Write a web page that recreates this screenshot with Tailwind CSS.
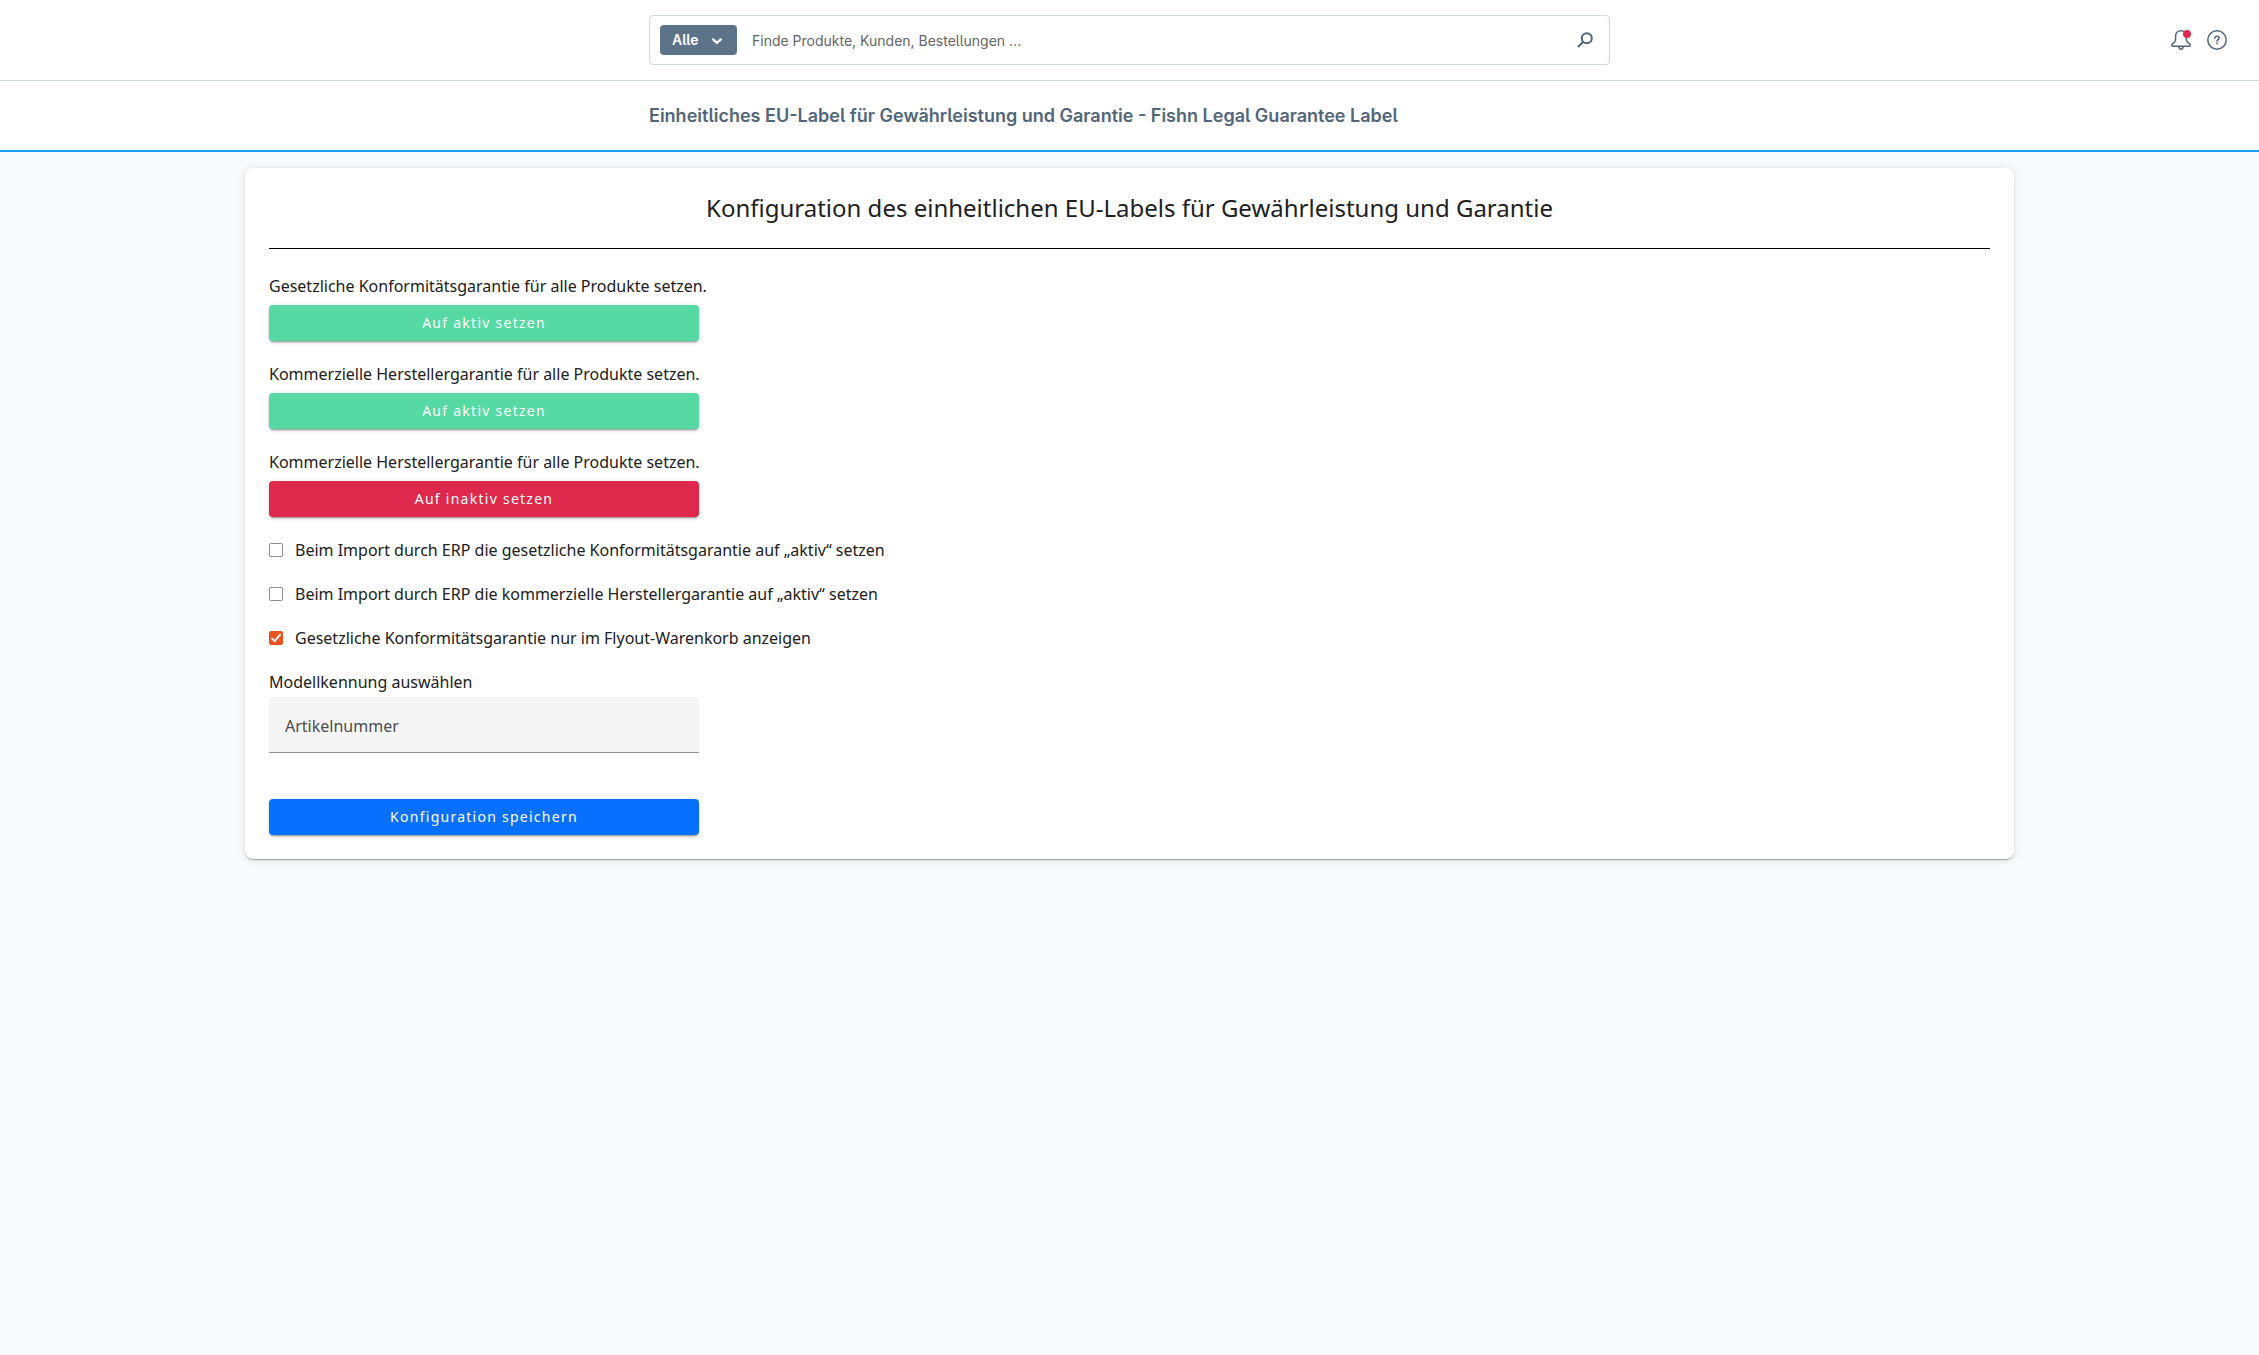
<!DOCTYPE html>
<html lang="de">
  <head>
    <meta charset="UTF-8" />
    <meta name="viewport" content="width=device-width, initial-scale=1.0" />
    <title>Fishn Legal Guarantee Label</title>
    <script src="https://cdn.jsdelivr.net/npm/@tailwindcss/browser@4"></script>
  </head>
  <body class="bg-[#f9fafb] min-h-screen text-[#212121] font-['Noto_Sans',sans-serif]">
    <!-- Top bar -->
    <header
      class="flex items-center bg-white border-b border-[#d1d9e0] py-[15px] font-['Inter',sans-serif] [font-feature-settings:'cv05']"
    >
      <div class="flex-1 px-4"></div>
      <form
        id="searchForm"
        role="search"
        class="flex items-center w-full max-w-[961px] h-[50px] pl-2.5 pr-3 bg-white border border-[#d1d9e0] rounded"
      >
        <div class="relative">
          <select
            aria-label="Suchbereich"
            class="appearance-none w-[77px] h-[30px] pl-3 rounded bg-[#5c738a] text-white text-sm font-semibold"
          >
            <option>Alle</option>
          </select>
          <svg
            class="absolute right-[14px] top-[10px] w-3 h-3 pointer-events-none"
            viewBox="0 0 12 12"
            fill="none"
            stroke="#fff"
            stroke-width="2.4"
            stroke-linecap="round"
            stroke-linejoin="round"
          >
            <path d="M2.200 4.4 6 8 9.800 4.4" />
          </svg>
        </div>
        <input
          type="search"
          aria-label="Suche"
          placeholder="Finde Produkte, Kunden, Bestellungen ..."
          class="flex-1 h-full px-[15px] text-sm outline-none placeholder:text-[#666]"
        />
        <button type="submit" aria-label="Suchen" class="p-1">
          <svg
            class="w-4 h-4"
            viewBox="0 0 16 16"
            fill="none"
            stroke="#52667a"
            stroke-width="2"
            stroke-linecap="round"
          >
            <circle cx="9.8" cy="6.2" r="5" />
            <path d="M6 10 1.5 14.5" />
          </svg>
        </button>
      </form>
      <div class="flex-1 px-4">
        <div class="flex justify-end gap-4 pr-4">
          <button type="button" aria-label="Benachrichtigungen" class="relative">
            <svg
              class="w-5 h-5"
              viewBox="0 0 20 20"
              fill="none"
              stroke="#52667a"
              stroke-width="1.5"
              stroke-linecap="round"
              stroke-linejoin="round"
            >
              <path
                d="M10 .8C6.600.8 4.600 3.200 4.600 6.200V9.200C4.600 11.300 3.800 12.200 2.200 13.200C1.300 13.800.8 14.500.8 15.300C.8 15.900 1.200 16.200 1.700 16.200H18.300C18.800 16.200 19.200 15.900 19.200 15.300C19.200 14.500 18.700 13.800 17.800 13.200C16.200 12.200 15.400 11.300 15.400 9.200V6.200C15.400 3.200 13.400.8 10 .8Z"
              />
              <path d="M7.800 17.200C8.200 18.600 9 19.200 10 19.200S11.800 18.600 12.200 17.200" />
            </svg>
            <span class="absolute right-0 top-0 w-2 h-2 rounded-full bg-[#de294c]"></span>
          </button>
          <button type="button" aria-label="Hilfe">
            <svg
              class="w-5 h-5"
              viewBox="0 0 20 20"
              fill="none"
              stroke="#52667a"
              stroke-width="1.5"
              stroke-linecap="round"
              stroke-linejoin="round"
            >
              <circle cx="10" cy="10" r="9.200" />
              <path d="M7.900 8.200C7.900 7 8.800 6.300 10 6.300S12.100 7.100 12.100 8.200C12.100 9.500 10 9.700 10 11.200" />
              <circle cx="10" cy="13.500" r=".3" />
            </svg>
          </button>
        </div>
      </div>
    </header>

    <!-- Page title -->
    <div
      class="bg-white border-b-2 border-[#189eff] font-['Inter',sans-serif] [font-feature-settings:'cv05']"
    >
      <h1
        class="max-w-[961px] mx-auto py-[21px] text-lg leading-[27px] font-semibold text-[#52667a]"
      >
        Einheitliches EU-Label für Gewährleistung und Garantie - Fishn Legal Guarantee Label
      </h1>
    </div>

    <main class="p-4">
      <form
        id="configForm"
        class="max-w-[1769px] mx-auto p-6 bg-white rounded-lg leading-[22px] shadow-[0_2px_1px_-1px_rgba(0,0,0,0.2),0_1px_1px_0_rgba(0,0,0,0.14),0_1px_8px_0_rgba(0,0,0,0.12)]"
      >
        <h2 class="pb-6 mb-[26px] border-b border-black text-center text-2xl leading-8">
          Konfiguration des einheitlichen EU-Labels für Gewährleistung und Garantie
        </h2>

        <div class="space-y-[22px]">
          <div>
            <p class="mb-2">Gesetzliche Konformitätsgarantie für alle Produkte setzen.</p>
            <button
              type="button"
              class="block w-full max-w-[430px] h-9 rounded bg-[#57d9a3] text-white text-sm tracking-[0.09em] shadow-[0_3px_1px_-2px_rgba(0,0,0,0.2),0_2px_2px_0_rgba(0,0,0,0.14),0_1px_5px_0_rgba(0,0,0,0.12)]"
            >
              Auf aktiv setzen
            </button>
          </div>

          <div>
            <p class="mb-2">Kommerzielle Herstellergarantie für alle Produkte setzen.</p>
            <button
              type="button"
              class="block w-full max-w-[430px] h-9 rounded bg-[#57d9a3] text-white text-sm tracking-[0.09em] shadow-[0_3px_1px_-2px_rgba(0,0,0,0.2),0_2px_2px_0_rgba(0,0,0,0.14),0_1px_5px_0_rgba(0,0,0,0.12)]"
            >
              Auf aktiv setzen
            </button>
          </div>

          <div>
            <p class="mb-2">Kommerzielle Herstellergarantie für alle Produkte setzen.</p>
            <button
              type="button"
              class="block w-full max-w-[430px] h-9 rounded bg-[#de294c] text-white text-sm tracking-[0.09em] shadow-[0_3px_1px_-2px_rgba(0,0,0,0.2),0_2px_2px_0_rgba(0,0,0,0.14),0_1px_5px_0_rgba(0,0,0,0.12)]"
            >
              Auf inaktiv setzen
            </button>
          </div>

          <div class="flex items-center gap-3">
            <input
              type="checkbox"
              id="importLegal"
              class="appearance-none w-3.5 h-3.5 bg-white border border-[#8f8f9d] rounded-xs checked:bg-[#e95420] checked:border-[#e95420]"
            />
            <label for="importLegal"
              >Beim Import durch ERP die gesetzliche Konformitätsgarantie auf „aktiv“ setzen</label
            >
          </div>

          <div class="flex items-center gap-3">
            <input
              type="checkbox"
              id="importCommercial"
              class="appearance-none w-3.5 h-3.5 bg-white border border-[#8f8f9d] rounded-xs checked:bg-[#e95420] checked:border-[#e95420]"
            />
            <label for="importCommercial"
              >Beim Import durch ERP die kommerzielle Herstellergarantie auf „aktiv“ setzen</label
            >
          </div>

          <div class="flex items-center gap-3">
            <span class="relative flex">
              <input
                type="checkbox"
                id="flyoutOnly"
                checked
                class="peer appearance-none w-3.5 h-3.5 bg-white border border-[#8f8f9d] rounded-xs checked:bg-[#e95420] checked:border-[#e95420]"
              />
              <svg
                class="hidden peer-checked:block absolute inset-0 w-3.5 h-3.5 pointer-events-none"
                viewBox="0 0 14 14"
                fill="none"
                stroke="#fff"
                stroke-width="1.8"
                stroke-linecap="round"
                stroke-linejoin="round"
              >
                <path d="M3 7.600 5.600 10.200 11 3.800" />
              </svg>
            </span>
            <label for="flyoutOnly"
              >Gesetzliche Konformitätsgarantie nur im Flyout-Warenkorb anzeigen</label
            >
          </div>

          <div>
            <label for="modelId" class="block mb-1">Modellkennung auswählen</label>
            <input
              type="text"
              id="modelId"
              placeholder="Artikelnummer"
              class="block w-full max-w-[430px] h-14 px-4 pt-0.5 bg-[#f5f5f5] border-b border-[#949494] rounded-t outline-none placeholder:text-[#4d4d4d]"
            />
          </div>
        </div>

        <button
          type="submit"
          class="block w-full max-w-[430px] h-9 mt-[46px] rounded bg-[#0870ff] text-white text-sm tracking-[0.09em] shadow-[0_3px_1px_-2px_rgba(0,0,0,0.2),0_2px_2px_0_rgba(0,0,0,0.14),0_1px_5px_0_rgba(0,0,0,0.12)]"
        >
          Konfiguration speichern
        </button>
      </form>
    </main>

    <script>
      document.querySelectorAll('form').forEach(form => {
        form.addEventListener('submit', e => e.preventDefault())
      })
    </script>
  </body>
</html>
